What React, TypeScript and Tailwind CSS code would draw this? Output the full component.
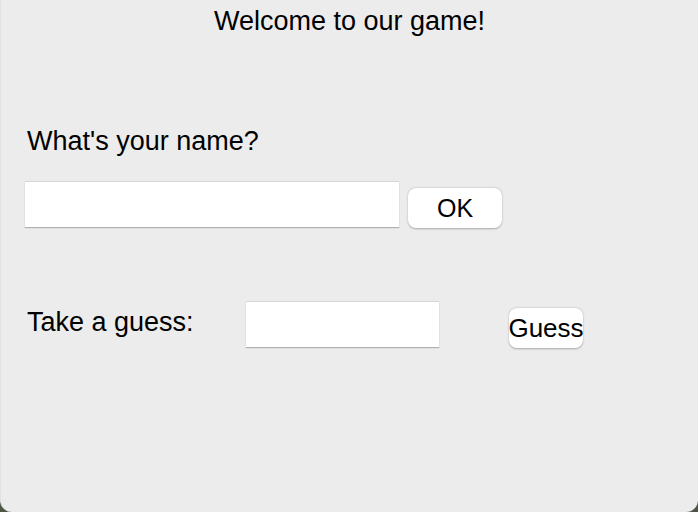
export default function App() {
  const font = { fontFamily: '"Liberation Sans", Arial, sans-serif' };
  return (
    <div className="w-[698px] h-[512px] bg-[#4d5546]" style={font}>
      <div className="w-full h-full bg-[#ececec] rounded-b-[12px] border-l border-[#e2e2e2] flex flex-col text-black">
        <div className="h-[42px] flex items-center justify-center text-[27px] leading-none">
          Welcome to our game!
        </div>
        <div className="pl-[26px] mt-[86px] text-[27px] leading-none">What's your name?</div>
        <div className="flex items-start pl-[24px] mt-[26px]">
          <div className="w-[374px] h-[46px] bg-white border-t border-[#d6d6d6] shadow-[0_1px_1px_rgba(0,0,0,0.25)]" />
          <button className="ml-[9px] mt-[7px] w-[94px] h-[40px] bg-white rounded-[8px] shadow-[0_0.5px_2px_rgba(0,0,0,0.3)] text-[25px] leading-none flex items-center justify-center">
            OK
          </button>
        </div>
        <div className="flex items-start pl-[26px] mt-[73px] h-[46px]">
          <div className="w-[219px] mt-[8px] text-[27px] leading-none">Take a guess:</div>
          <div className="w-[193px] h-[46px] bg-white border-t border-[#d6d6d6] shadow-[0_1px_1px_rgba(0,0,0,0.25)]" />
          <button className="ml-[70px] mt-[7px] w-[74px] h-[40px] bg-white rounded-[8px] shadow-[0_0.5px_2px_rgba(0,0,0,0.3)] text-[26px] leading-none flex items-center justify-center whitespace-nowrap">
            Guess
          </button>
        </div>
      </div>
    </div>
  );
}
